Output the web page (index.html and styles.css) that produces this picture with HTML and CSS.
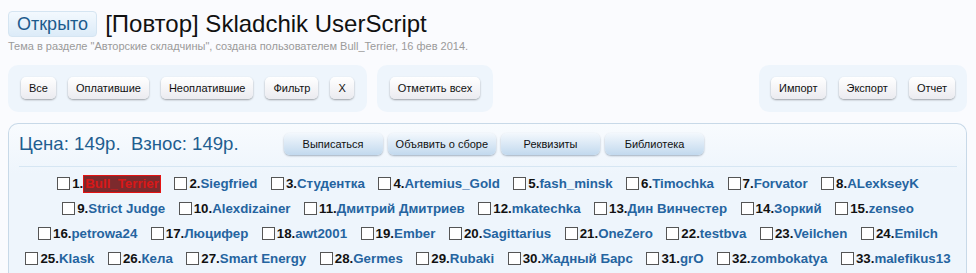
FILE: index.html
```html
<!DOCTYPE html>
<html lang="ru">
<head>
    <meta charset="UTF-8">
    <title>[Повтор] Skladchik UserScript</title>
    <link rel="stylesheet" href="styles.css">
</head>
<body>
<div class="page">
    <div class="title-row">
        <span class="badge">Открыто</span>
        <h1>[Повтор] Skladchik UserScript</h1>
    </div>
    <p class="subtitle">Тема в разделе "Авторские складчины", создана пользователем Bull_Terrier, 16 фев 2014.</p>

    <div class="toolbar">
        <div class="tool-panel">
            <button>Все</button>
            <button>Оплатившие</button>
            <button>Неоплатившие</button>
            <button>Фильтр</button>
            <button>X</button>
        </div>
        <div class="tool-panel">
            <button>Отметить всех</button>
        </div>
        <div class="tool-panel right">
            <button>Импорт</button>
            <button>Экспорт</button>
            <button>Отчет</button>
        </div>
    </div>

    <div class="main-panel">
        <div class="panel-head">
            <span class="price">Цена: 149р.&nbsp; Взнос: 149р.</span>
            <div class="head-buttons">
                <button class="blue">Выписаться</button>
                <button class="blue">Объявить о сборе</button>
                <button class="blue">Реквизиты</button>
                <button class="blue">Библиотека</button>
            </div>
        </div>
        <div class="members" id="members"></div>
    </div>
</div>
<script>
    const members = ["Bull_Terrier", "Siegfried", "Студентка", "Artemius_Gold", "fash_minsk", "Timochka", "Forvator", "ALexkseyK",
        "Strict Judge", "Alexdizainer", "Дмитрий Дмитриев", "mkatechka", "Дин Винчестер", "Зоркий", "zenseo",
        "petrowa24", "Люцифер", "awt2001", "Ember", "Sagittarius", "OneZero", "testbva", "Veilchen", "Emilch",
        "Klask", "Кела", "Smart Energy", "Germes", "Rubaki", "Жадный Барс", "grO", "zombokatya", "malefikus13"];
    const list = document.getElementById("members");

    members.forEach((name, i) => {
        let item = document.createElement("label");
        item.className = "member";
        let box = document.createElement("input");
        box.type = "checkbox";
        let num = document.createElement("b");
        num.innerText = (i + 1) + ".";
        let nick = document.createElement("a");
        nick.innerText = name;
        if (i === 0) nick.classList.add("author");
        item.append(box, num, nick);
        list.appendChild(item);
    });
</script>
</body>
</html>
```

FILE: styles.css
```css
* {
    margin: 0;
    padding: 0;
    box-sizing: border-box;
}

body {
    background: #fafbfe;
    font-family: 'Liberation Sans', Arial, sans-serif;
    color: #000;
}

.page {
    padding: 11px 9px 0 8px;
}

.title-row {
    display: flex;
    align-items: center;
    gap: 8px;
}

.badge {
    height: 26px;
    line-height: 24px;
    padding: 0 8px;
    font-size: 18px;
    color: #1d5b8d;
    background: linear-gradient(#f3f9fe, #dcebf8);
    border: 1px solid #d5e5f2;
    border-radius: 4px;
}

h1 {
    font-size: 24px;
    font-weight: normal;
    line-height: 26px;
    color: #111;
}

.subtitle {
    margin-top: 3px;
    font-size: 11px;
    line-height: 13px;
    color: #9a9a9a;
}

.toolbar {
    display: flex;
    gap: 10px;
    margin-top: 12px;
}

.tool-panel {
    display: flex;
    gap: 12px;
    padding: 12px 13px 13px 13px;
    background: #eef5fc;
    border-radius: 10px;
}

.tool-panel.right {
    margin-left: auto;
    padding: 12px 12px 13px 12px;
    gap: 13px;
}

button {
    height: 22px;
    padding: 0 8px;
    font-family: 'Liberation Sans', Arial, sans-serif;
    font-size: 11px;
    color: #111;
    border: none;
    border-radius: 5px;
    background: linear-gradient(#ffffff, #ebebf0);
    box-shadow: 0 1px 2px rgba(0, 0, 0, 0.35);
    cursor: pointer;
}

.main-panel {
    margin-top: 11px;
    height: 200px;
    border: 1px solid #c8d9e8;
    border-bottom: none;
    border-radius: 10px 10px 0 0;
    background: linear-gradient(#f8fbfe, #eef5fc 50px);
    padding: 9px 9px 0 10px;
}

.panel-head {
    display: flex;
    align-items: center;
    padding-bottom: 11px;
    border-bottom: 1px solid #d6e6f3;
}

.price {
    font-family: Arial, 'Liberation Sans', sans-serif;
    font-size: 18.6px;
    color: #1f5e90;
    white-space: pre;
}

.head-buttons {
    display: flex;
    gap: 5px;
    margin-left: 45px;
}

button.blue {
    min-width: 99px;
    border-radius: 6px;
    background: linear-gradient(#f3f8fd, #c2d9ee);
    box-shadow: 0 1px 2px rgba(40, 70, 100, 0.4);
}

.members {
    display: flex;
    flex-wrap: wrap;
    justify-content: center;
    column-gap: 13.5px;
    padding-top: 4px;
}

.member {
    display: flex;
    align-items: center;
    height: 25px;
    font-family: Arial, 'Liberation Sans', sans-serif;
    font-size: 13.3px;
    font-weight: bold;
}

.member input {
    appearance: none;
    width: 13px;
    height: 13px;
    margin-right: 2px;
    background: #fff;
    border: 1px solid #555;
}

.member b {
    color: #111;
}

.member a {
    color: #2564a0;
}

.member a.author {
    color: #d81818;
    background: #7c2a2d;
    border: 1px solid #e41313;
    padding: 0 1px;
    line-height: 16px;
}
```
